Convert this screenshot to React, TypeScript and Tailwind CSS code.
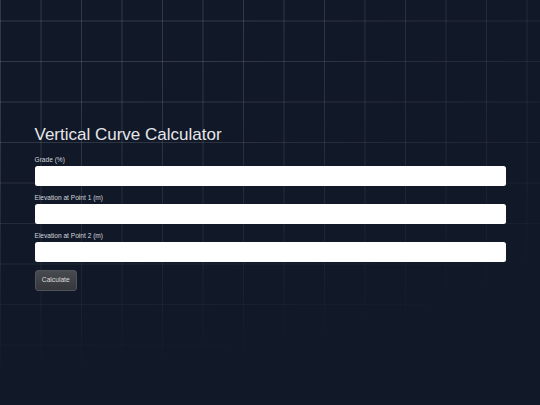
import { useState } from "react"

const fields = [
  { key: "grade", label: "Grade (%)" },
  { key: "elev1", label: "Elevation at Point 1 (m)" },
  { key: "elev2", label: "Elevation at Point 2 (m)" },
]

export default function App() {
  const [values, setValues] = useState<Record<string, string>>({ grade: "", elev1: "", elev2: "" })

  return (
    <div className="relative min-h-screen overflow-hidden bg-[#111827] font-['Liberation_Sans',Arial,sans-serif]">
      {/* grid backdrop, fades toward the bottom right */}
      <div className="pointer-events-none absolute inset-0 bg-[linear-gradient(to_right,rgba(255,255,255,0.14)_1px,transparent_1px),linear-gradient(to_bottom,rgba(255,255,255,0.14)_1px,transparent_1px)] bg-[size:40.5px_40.5px] bg-[position:0px_20.5px] [mask-image:radial-gradient(ellipse_150%_95%_at_0%_0%,#000_30%,transparent_100%)]" />

      <div className="relative mx-auto w-[471px] pt-[125px]">
        <h1 className="text-[17px] leading-[20px] text-[#e5e7eb]">Vertical Curve Calculator</h1>

        <div className="mt-[11px] flex flex-col gap-[8.5px]">
          {fields.map((f) => (
            <div key={f.key} className="flex flex-col">
              <label className="mb-[2px] text-[6.6px] leading-[8px] text-[#d1d5db]">{f.label}</label>
              <input
                type="number"
                value={values[f.key]}
                onChange={(e) => setValues({ ...values, [f.key]: e.target.value })}
                className="h-[19.5px] w-full rounded-[2.5px] bg-white px-2 text-[8px] text-gray-900 outline-none"
              />
            </div>
          ))}
        </div>

        <button className="mt-[8px] h-[21px] w-[42.5px] rounded-[3px] border border-[#505358] bg-[linear-gradient(to_bottom,#474a4f,#35373b)] text-[6.7px] text-[#dcdcdc]">
          Calculate
        </button>
      </div>
    </div>
  )
}
